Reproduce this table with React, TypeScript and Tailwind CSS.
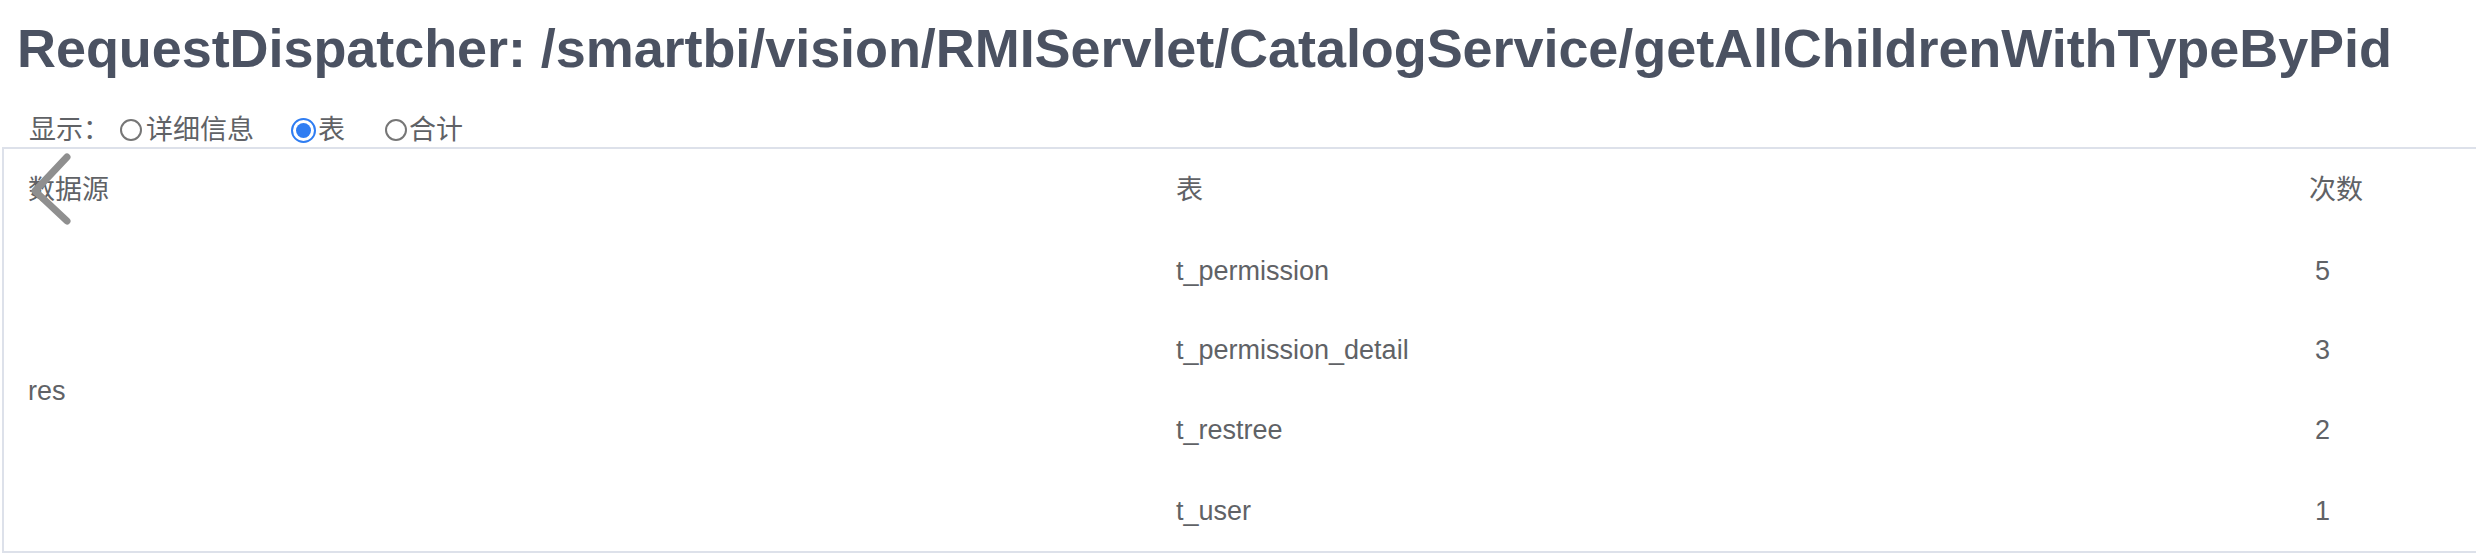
import React from "react";

const font = { fontFamily: '"Liberation Sans", "Noto Sans CJK SC", sans-serif' };

function Radio({ checked }: { checked?: boolean }) {
  if (checked) {
    return (
      <span className="inline-flex h-[25px] w-[25px] items-center justify-center rounded-full border-[2px] border-[#2f7df2] bg-white">
        <span className="h-[15px] w-[15px] rounded-full bg-[#2f7df2]" />
      </span>
    );
  }
  return <span className="inline-block h-[22px] w-[22px] rounded-full border-[2px] border-[#767676] bg-white" />;
}

const rows = [
  { t: "t_permission", n: "5" },
  { t: "t_permission_detail", n: "3" },
  { t: "t_restree", n: "2" },
  { t: "t_user", n: "1" },
];

export default function App() {
  return (
    <div className="relative h-[560px] w-[2476px] overflow-hidden bg-white" style={font}>
      <div className="pt-[18px] pl-[17px]">
        <h1 className="m-0 text-[54px] font-bold leading-[60px] tracking-[-0.07px] text-[#4b5262] whitespace-nowrap">
          RequestDispatcher: /smartbi/vision/RMIServlet/CatalogService/getAllChildrenWithTypeByPid
        </h1>
      </div>
      <div className="mt-[35px] flex h-[34px] items-center pl-[29px] text-[27px] text-[#606266]">
        <span>显示：</span>
        <span className="ml-[10px] flex items-center">
          <Radio />
          <span className="ml-[4px]">详细信息</span>
        </span>
        <span className="ml-[37px] flex items-center">
          <Radio checked />
          <span className="ml-[2px]">表</span>
        </span>
        <span className="ml-[40px] flex items-center">
          <Radio />
          <span className="ml-[2px]">合计</span>
        </span>
      </div>
      <div className="ml-[2px] h-[406px] border-l-2 border-t-2 border-b-2 border-[#dde1ea] text-[27px] text-[#606266]">
        <div className="grid grid-cols-[1148px_1133px_1fr] grid-rows-[83px_78px_80px_81px_80px]">
          <div className="flex items-center pl-[24px]">数据源</div>
          <div className="flex items-center pl-[24px]">表</div>
          <div className="flex items-center pl-[24px]">次数</div>
          <div className="row-span-4 flex items-center pl-[24px]">res</div>
          {rows.map((r) => (
            <React.Fragment key={r.t}>
              <div className="flex items-center pl-[24px]">{r.t}</div>
              <div className="flex items-center pl-[30px]">{r.n}</div>
            </React.Fragment>
          ))}
        </div>
      </div>
      <svg
        className="absolute left-[28px] top-[152px]"
        width="46"
        height="74"
        viewBox="0 0 46 74"
        fill="none"
      >
        <path d="M39 5 L7 39 L39 69" stroke="#8f8f8f" strokeWidth="7" strokeLinecap="round" strokeLinejoin="round" />
      </svg>
    </div>
  );
}
